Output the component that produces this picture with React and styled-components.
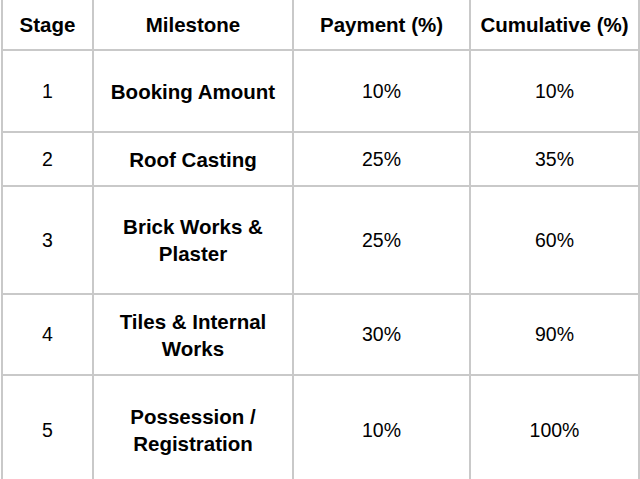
import React from 'react';
import styled, { createGlobalStyle } from 'styled-components';

const GlobalStyle = createGlobalStyle`
  html, body {
    margin: 0;
    padding: 0;
    background: #ffffff;
  }
  body {
    font-family: 'Liberation Sans', Arial, sans-serif;
    overflow: hidden;
  }
`;

const rows = [
  { stage: '1', milestone: 'Booking Amount', payment: '10%', cumulative: '10%', height: 80 },
  { stage: '2', milestone: 'Roof Casting', payment: '25%', cumulative: '35%', height: 52 },
  { stage: '3', milestone: 'Brick Works & Plaster', payment: '25%', cumulative: '60%', height: 106 },
  { stage: '4', milestone: 'Tiles & Internal Works', payment: '30%', cumulative: '90%', height: 79 },
  { stage: '5', milestone: 'Possession / Registration', payment: '10%', cumulative: '100%', height: 108 }
];

const App = () => {
  return (
    <>
      <GlobalStyle />
      <Table>
        <Cell $bold $height={49}>Stage</Cell>
        <Cell $bold $height={49}>Milestone</Cell>
        <Cell $bold $height={49}>Payment (%)</Cell>
        <Cell $bold $height={49}>Cumulative (%)</Cell>
        {rows.map((row) => (
          <React.Fragment key={row.stage}>
            <Cell $height={row.height}>{row.stage}</Cell>
            <Cell $bold $height={row.height}>{row.milestone}</Cell>
            <Cell $height={row.height}>{row.payment}</Cell>
            <Cell $height={row.height}>{row.cumulative}</Cell>
          </React.Fragment>
        ))}
      </Table>
    </>
  );
};

export default App;

const Table = styled.div`
  display: grid;
  grid-template-columns: 89px 198px 175px 167px;
  gap: 2px;
  padding: 2px;
  margin: -2px 0 0 1px;
  width: 639px;
  box-sizing: border-box;
  background-color: #c9c9c9;
`;

const Cell = styled.div`
  display: flex;
  align-items: center;
  justify-content: center;
  height: ${(p) => p.$height}px;
  padding: 0 8px;
  box-sizing: border-box;
  background-color: #ffffff;
  color: #000000;
  text-align: center;
  font-size: ${(p) => (p.$bold ? '20.5px' : '19.5px')};
  font-weight: ${(p) => (p.$bold ? 700 : 400)};
  line-height: 27px;
`;
